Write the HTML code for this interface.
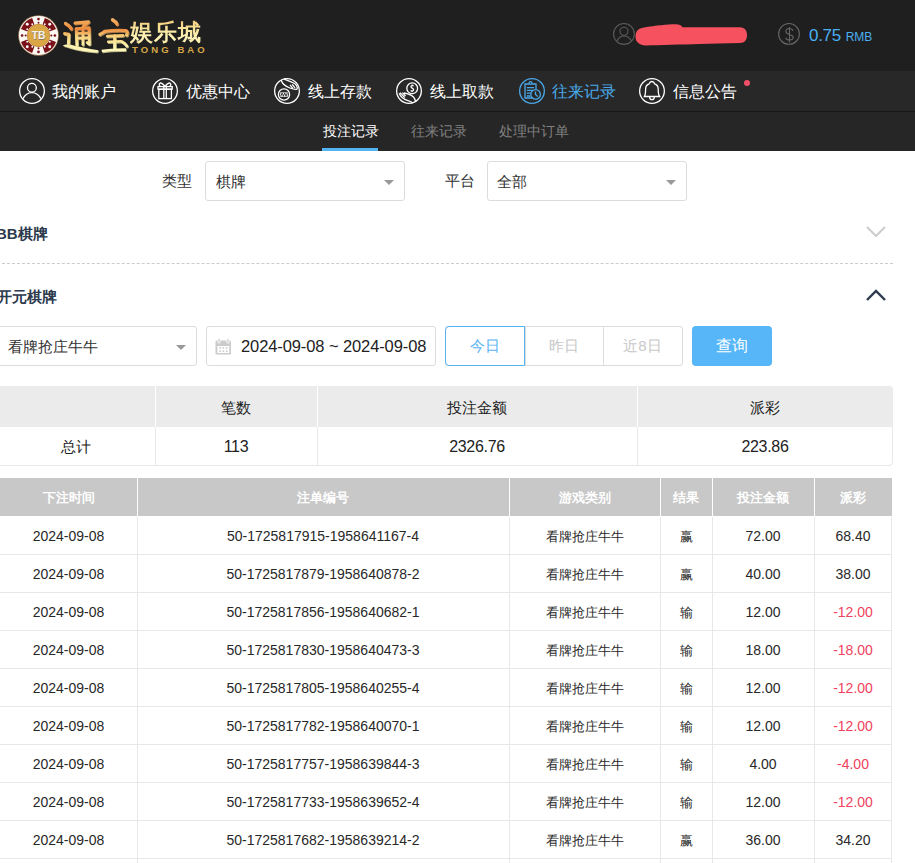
<!DOCTYPE html>
<html><head><meta charset="utf-8">
<style>
*{margin:0;padding:0;box-sizing:border-box}
html,body{width:915px;height:863px;overflow:hidden;background:#fff}
body{position:relative;font-family:"Liberation Sans",sans-serif;color:#333}
.abs{position:absolute}
#hdr{left:0;top:0;width:915px;height:71px;background:#1f1f1f}
#nav{left:0;top:71px;width:915px;height:40px;background:#282828}
#sep{left:0;top:111px;width:915px;height:1px;background:#171717}
#tabs{left:0;top:112px;width:915px;height:39px;background:#262626}
.ni{position:absolute;top:78px;height:26px}
.ni svg{position:absolute;left:0;top:0}
.nt{position:absolute;top:82px;font-size:16px;line-height:20px;color:#fff;font-weight:500;white-space:nowrap}
.tab{position:absolute;top:121px;font-size:14px;line-height:20px;color:#808080;white-space:nowrap}
.lbl{position:absolute;font-size:15px;line-height:20px;color:#333;white-space:nowrap}
.box{position:absolute;border:1px solid #dcdcdc;border-radius:3px;background:#fff}
.caret{position:absolute;width:0;height:0;border-left:5px solid transparent;border-right:5px solid transparent;border-top:5px solid #999}
table{border-collapse:collapse;position:absolute}
.sum td{border:1px solid #e8e8e8;text-align:center;font-size:15px;color:#222;height:39px}
.dt td{border-right:1px solid #e8e8e8;border-bottom:1px solid #e8e8e8;text-align:center;font-size:14px;color:#333;height:38px}
.dt th{background:#c8c8c8;color:#fff;font-weight:bold;font-size:13px;border-right:1px solid #fff;height:38px}
.neg{color:#f0425c}
.num{font-size:16px;letter-spacing:-0.3px}
.cj{font-size:13px}
.logo{font-family:"Liberation Serif",serif;font-weight:bold;white-space:nowrap;background:linear-gradient(180deg,#f5c878 0%,#f8e49a 35%,#fff4b8 70%,#f8e8a0 100%);-webkit-background-clip:text;background-clip:text;color:transparent}
.logo2{font-family:"Liberation Sans",sans-serif;font-weight:bold;white-space:nowrap;color:#d8a848}
.th{position:absolute;top:488px;font-size:13px;line-height:20px;font-weight:bold;color:#fff;text-align:center;white-space:nowrap}
.td{position:absolute;font-size:14px;line-height:20px;color:#282828;text-align:center;white-space:nowrap}
.td.neg{color:#f0425c}
</style></head><body>
<div id="hdr" class="abs"></div>
<div id="nav" class="abs"></div>
<div id="sep" class="abs"></div>
<div id="tabs" class="abs"></div>

<!-- logo chip -->
<svg class="abs" style="left:18px;top:15px" width="41" height="41" viewBox="0 0 40 40">
<circle cx="20" cy="20" r="19.8" fill="#a88660"/><circle cx="20" cy="20" r="19.1" fill="#fbf8f4"/>
<path fill="#7a1018" d="M26.22 2.90 A18.2 18.2 0 0 1 37.10 13.78 L30.81 16.07 A11.5 11.5 0 0 0 23.93 9.19 Z M37.10 26.22 A18.2 18.2 0 0 1 26.22 37.10 L23.93 30.81 A11.5 11.5 0 0 0 30.81 23.93 Z M13.78 37.10 A18.2 18.2 0 0 1 2.90 26.22 L9.19 23.93 A11.5 11.5 0 0 0 16.07 30.81 Z M2.90 13.78 A18.2 18.2 0 0 1 13.78 2.90 L16.07 9.19 A11.5 11.5 0 0 0 9.19 16.07 Z"/>
<circle cx="30.96" cy="9.04" r="1.4" fill="#fff"/><circle cx="26.11" cy="8.98" r="0.9" fill="#fff"/><circle cx="31.02" cy="13.89" r="0.9" fill="#fff"/><circle cx="30.96" cy="30.96" r="1.4" fill="#fff"/><circle cx="31.02" cy="26.11" r="0.9" fill="#fff"/><circle cx="26.11" cy="31.02" r="0.9" fill="#fff"/><circle cx="9.04" cy="30.96" r="1.4" fill="#fff"/><circle cx="13.89" cy="31.02" r="0.9" fill="#fff"/><circle cx="8.98" cy="26.11" r="0.9" fill="#fff"/><circle cx="9.04" cy="9.04" r="1.4" fill="#fff"/><circle cx="8.98" cy="13.89" r="0.9" fill="#fff"/><circle cx="13.89" cy="8.98" r="0.9" fill="#fff"/><circle cx="20.00" cy="4.00" r="1.3" fill="#7a1018"/><circle cx="20.00" cy="7.50" r="1" fill="#7a1018"/><circle cx="36.00" cy="20.00" r="1.3" fill="#7a1018"/><circle cx="32.50" cy="20.00" r="1" fill="#7a1018"/><circle cx="20.00" cy="36.00" r="1.3" fill="#7a1018"/><circle cx="20.00" cy="32.50" r="1" fill="#7a1018"/><circle cx="4.00" cy="20.00" r="1.3" fill="#7a1018"/><circle cx="7.50" cy="20.00" r="1" fill="#7a1018"/>
<circle cx="20" cy="20" r="11.2" fill="#c08a30"/><circle cx="20" cy="20" r="10.5" fill="#dba646"/>
<text x="20.4" y="24" font-size="10" font-family="Liberation Sans" font-weight="bold" fill="#8a7a60" text-anchor="middle">TB</text><text x="20" y="23.6" font-size="10" font-family="Liberation Sans" font-weight="bold" fill="#f6f2ea" text-anchor="middle">TB</text>
</svg>
<svg class="abs" style="left:58px;top:14px" width="74" height="44" viewBox="58 14 74 44">
<defs><linearGradient id="gg" gradientUnits="userSpaceOnUse" x1="0" y1="19" x2="0" y2="53"><stop offset="0" stop-color="#f4b060"/><stop offset="0.3" stop-color="#ec8c40"/><stop offset="0.5" stop-color="#f6d07a"/><stop offset="0.75" stop-color="#fcf0a8"/><stop offset="1" stop-color="#fff8c0"/></linearGradient></defs>
<g transform="translate(0.8,1)" opacity="0.7"><use href="#tb" stroke="#000"/><use href="#tbf" fill="#000"/></g>
<g id="tb" fill="none" stroke="url(#gg)" stroke-linecap="round" stroke-linejoin="round">
<path d="M65.5 23.5 Q69 25 71.2 28.5" stroke-width="3.3"/>
<path d="M75 23 L88.5 21.8 L83 26.5" stroke-width="2.9"/>
<path d="M76.2 28.8 L76.8 45" stroke-width="2.9"/>
<path d="M76.2 28.6 L89 27.8 L89.3 44 L87.2 42.6" stroke-width="2.9"/>
<path d="M77 33.2 L88.5 32.7 M77 38 L88.5 37.6" stroke-width="2.5"/>
<path d="M82.8 28 L82.8 44.5" stroke-width="2.5"/>
<path d="M64.5 33.5 L68.8 34.2 L68.4 43.2" stroke-width="2.9"/>
<path d="M104.5 31.2 Q115 29.8 126 30.5 Q128.2 31.5 126.5 35" stroke-width="3.1"/>
<path d="M99.8 34.2 L104.3 31.8" stroke-width="2.9"/>
<path d="M112.5 19.8 Q115.8 21.5 116.8 24" stroke-width="3.3"/>
<path d="M107.2 36.2 L123 35.3" stroke-width="2.7"/>
<path d="M108.2 41.8 L121 41.2" stroke-width="2.5"/>
<path d="M114.6 35.8 L114.6 49" stroke-width="2.9"/>
<path d="M122.2 41.8 Q125 43.2 126.8 46" stroke-width="2.9"/>
</g>
<g id="tbf" fill="url(#gg)">
<path d="M62.5 45.8 Q66 43.4 71 44.8 Q82 47.8 98.5 50.2 L97.3 52.4 Q80 51.5 70 48 Q66 46.7 62.5 45.8 Z"/>
<path d="M101.5 49.8 Q112 48 126.2 48.3 L125.6 51 Q112 50.6 102 52.2 Z"/>
</g>
</svg>
<div class="abs logo" style="left:130px;top:19px;font-size:22.5px;line-height:27px;letter-spacing:1px">娱乐城</div>
<div class="abs logo2" style="left:132px;top:44px;font-size:9.5px;line-height:11px;letter-spacing:3.1px">TONG BAO</div>

<!-- header right -->
<svg class="abs" style="left:613px;top:23px" width="22" height="22" viewBox="0 0 22 22" fill="none" stroke="#5a5a5a" stroke-width="1.1"><circle cx="10.95" cy="10.95" r="10.4"/><circle cx="11" cy="8.3" r="4"/><path d="M3.9 18 C5.5 14.6 8 13 11 13 C14 13 16.6 14.6 18.6 18"/></svg>
<svg class="abs" style="left:630px;top:20px" width="125" height="30" viewBox="630 20 125 30"><path fill="#f5515f" d="M644 27.5 C655 25.5 668 24.5 675 24.3 C679 24.2 681 25 682.5 27.3 L740 27.3 C745 27.3 747 31 747 35 C747 39.5 745 43 740 43 C725 43.5 712 43.7 700 44 C680 44.6 660 45 646 45.5 C640 45.7 635.5 42 635.5 37 C635.5 31 638.5 28.3 644 27.5 Z"/></svg>
<svg class="abs" style="left:778px;top:23px" width="22" height="22" viewBox="0 0 22 22" fill="none" stroke="#666" stroke-width="1.1"><circle cx="11" cy="10.9" r="10.4"/><path d="M15 7.9 C14.5 6.3 13 5.5 11.4 5.5 C9.2 5.5 7.9 6.8 7.9 8.4 C7.9 10.2 9.5 10.8 11.4 11.4 C13.4 12 15.2 12.8 15.2 14.6 C15.2 16.3 13.6 17 11.4 17 C9.6 17 8.2 16.2 7.7 14.8 M11.5 3.9 V19.4"/></svg>
<div class="abs" style="left:809px;top:26px;font-size:17px;line-height:20px;color:#4ab0f2;white-space:nowrap"><span style="letter-spacing:-0.3px">0.75</span> <span style="font-size:12px">RMB</span></div>

<!-- nav -->
<svg class="ni" style="left:19px" width="26" height="26" viewBox="0 0 26 26" fill="none" stroke="#fff" stroke-width="1.3"><circle cx="13" cy="13" r="12.35"/><circle cx="12.9" cy="9.7" r="4.4"/><path d="M4 20.8 C6 16.5 9.5 14.6 12.9 14.6 C16.3 14.6 19.8 16.5 21.9 20.8"/></svg>
<div class="nt" style="left:52px">我的账户</div>
<svg class="ni" style="left:152px" width="26" height="26" viewBox="0 0 26 26" fill="none" stroke="#fff" stroke-width="1.3"><circle cx="13" cy="13" r="12.35"/><rect x="6" y="8.6" width="14.2" height="2.6"/><rect x="6.8" y="11.2" width="12.6" height="9.4"/><path d="M11.8 8.6 V20.6 M14.3 8.6 V20.6"/><path d="M12.9 8.3 C11.5 6.5 9.8 4.8 8.2 5 C6.8 5.4 7 7.2 8.2 8.3 M13.1 8.3 C14.5 6.5 16.2 4.8 17.8 5 C19.2 5.4 19 7.2 17.8 8.3"/></svg>
<div class="nt" style="left:186px">优惠中心</div>
<svg class="ni" style="left:274px" width="26" height="26" viewBox="0 0 26 26" fill="none" stroke="#fff" stroke-width="1.3"><circle cx="13" cy="13" r="12.35"/><path d="M7.2 2 C8 5.5 11 8.2 15.8 10 C18.5 11 21 11.8 23.2 11.2 M9.8 0.9 C13 2.2 16.5 3.5 19.5 5 C22 6.3 23.6 8.7 23.2 11.2 M16 6.8 L18.8 10.4 M18.2 6.3 L21 9.8"/><circle cx="10" cy="16.5" r="5.6"/><rect x="6.2" y="14.4" width="7.6" height="4.4" fill="#fff" stroke="none"/><path d="M6.8 18.2 L8.1 15 L9.4 18.2 L10.7 15 L12 18.2 L13.2 15" stroke="#282828" stroke-width="0.9"/></svg>
<div class="nt" style="left:308px">线上存款</div>
<svg class="ni" style="left:396px" width="26" height="26" viewBox="0 0 26 26" fill="none" stroke="#fff" stroke-width="1.3"><circle cx="13" cy="13" r="12.35"/><circle cx="16.2" cy="10.3" r="5.4"/><path d="M17.6 8.2 C17 7.4 15 7.4 14.9 8.8 C14.9 10.2 17.6 10 17.6 11.7 C17.6 13.2 15.4 13.2 14.7 12.3 M16.2 6.6 V7.4 M16.2 13.2 V14" stroke-width="1.2"/><path d="M3.2 15.3 C4.5 19 7.5 21.3 12 22.6 C14 23.2 15.8 24 16.8 25.2 M7.8 15 C11 15.5 15 16.5 17.5 19 C18.6 20.2 19.2 22 19.6 23.7 M4 14.6 L8.8 19.6 M6.4 14.6 L9.6 18"/></svg>
<div class="nt" style="left:430px">线上取款</div>
<svg class="ni" style="left:519px" width="26" height="26" viewBox="0 0 26 26" fill="none" stroke="#4aa8e8" stroke-width="1.3"><circle cx="13" cy="13" r="12.35"/><path d="M10 6 H6 V20 H13.5 M13 6 H17 V11.2"/><circle cx="11.5" cy="5" r="1.4"/><path d="M7.8 9.6 H15 M7.8 12.4 H14 M7.8 15.2 H11.5 M7.8 18 H11"/><circle cx="16.6" cy="16.4" r="4.8"/><path d="M16.5 13.4 V16.5 L18.7 18.4"/></svg>
<div class="nt" style="left:552px;color:#4aa8e8">往来记录</div>
<svg class="ni" style="left:639px" width="26" height="26" viewBox="0 0 26 26" fill="none" stroke="#fff" stroke-width="1.3"><circle cx="13" cy="13" r="12.35"/><path d="M5.4 18.5 L20.6 18.5 C19.5 17 19.2 14 19.2 11.2 C19.2 8.2 17.6 6.4 15.6 5.8 C15.2 4.3 14.3 3.5 12.9 3.5 C11.5 3.5 10.6 4.3 10.2 5.8 C8.2 6.4 6.6 8.2 6.6 11.2 C6.6 14 6.3 17 5.4 18.5 Z"/><path d="M10.6 18.7 C10.6 20.5 11.5 21.7 12.9 21.7 C14.3 21.7 15.3 20.5 15.3 18.7"/></svg>
<div class="nt" style="left:673px">信息公告</div>
<div class="abs" style="left:744px;top:80px;width:6px;height:6px;border-radius:50%;background:#f04f68"></div>

<!-- sub tabs -->
<div class="tab" style="left:323px;color:#fff;font-weight:500">投注记录</div>
<div class="abs" style="left:322px;top:148px;width:56px;height:3px;background:#52b5f2"></div>
<div class="tab" style="left:411px">往来记录</div>
<div class="tab" style="left:499px">处理中订单</div>

<!-- filters -->
<div class="lbl" style="left:162px;top:171px">类型</div>
<div class="box" style="left:205px;top:161px;width:200px;height:40px"></div>
<div class="lbl" style="left:216px;top:172px">棋牌</div>
<div class="caret" style="left:384px;top:180px"></div>
<div class="lbl" style="left:445px;top:171px">平台</div>
<div class="box" style="left:487px;top:161px;width:200px;height:40px"></div>
<div class="lbl" style="left:497px;top:172px">全部</div>
<div class="caret" style="left:666px;top:180px"></div>

<div class="abs" style="left:-4px;top:224px;font-size:15px;line-height:20px;font-weight:bold;color:#2d3a4d">BB棋牌</div>
<svg class="abs" style="left:866px;top:226px" width="20" height="12" viewBox="0 0 20 12" fill="none" stroke="#ccc" stroke-width="2"><path d="M1 1 L10 10 L19 1"/></svg>
<div class="abs" style="left:2px;top:263px;width:891px;height:0;border-top:1px dashed #ccc"></div>
<div class="abs" style="left:-3px;top:287px;font-size:15px;line-height:20px;font-weight:bold;color:#2d3a4d">开元棋牌</div>
<svg class="abs" style="left:866px;top:289px" width="20" height="12" viewBox="0 0 20 12" fill="none" stroke="#2d3a4d" stroke-width="2.4"><path d="M1 11 L10 2 L19 11"/></svg>

<div class="box" style="left:-10px;top:326px;width:207px;height:40px"></div>
<div class="lbl" style="left:8px;top:337px">看牌抢庄牛牛</div>
<div class="caret" style="left:176px;top:345px"></div>
<div class="box" style="left:206px;top:326px;width:230px;height:40px"></div>
<svg class="abs" style="left:215px;top:338px" width="17" height="17" viewBox="0 0 17 17"><rect x="0.5" y="2.4" width="15.5" height="14" rx="1.2" fill="#ccc"/><rect x="2.4" y="8" width="11.9" height="7" fill="#fff"/><g fill="#ccc"><rect x="4.4" y="9.1" width="1.6" height="1.6"/><rect x="7.6" y="9.1" width="1.6" height="1.6"/><rect x="10.9" y="9.1" width="1.6" height="1.6"/><rect x="4.4" y="12.4" width="1.6" height="1.6"/><rect x="7.6" y="12.4" width="1.6" height="1.6"/><rect x="10.9" y="12.4" width="1.6" height="1.6"/></g><g fill="#ccc" stroke="#fff" stroke-width="0.9"><rect x="2.9" y="0.5" width="2.2" height="4.6" rx="1"/><rect x="11.9" y="0.5" width="2.2" height="4.6" rx="1"/></g></svg>
<div class="lbl" style="left:241px;top:336px;font-size:16.5px;letter-spacing:-0.1px;color:#222">2024-09-08 ~ 2024-09-08</div>

<div class="box" style="left:445px;top:326px;width:238px;height:40px"></div>
<div class="abs" style="left:525px;top:327px;width:1px;height:38px;background:#dcdcdc"></div>
<div class="abs" style="left:603px;top:327px;width:1px;height:38px;background:#dcdcdc"></div>
<div class="abs" style="left:445px;top:326px;width:80px;height:40px;border:1px solid #56b4f2;border-radius:4px 0 0 4px"></div>
<div class="lbl" style="left:445px;top:336px;width:80px;text-align:center;color:#56b4f2">今日</div>
<div class="lbl" style="left:525px;top:336px;width:78px;text-align:center;color:#c8c8c8">昨日</div>
<div class="lbl" style="left:603px;top:336px;width:79px;text-align:center;color:#c8c8c8">近8日</div>
<div class="abs" style="left:692px;top:326px;width:80px;height:40px;background:#56b6f7;border-radius:4px"></div>
<div class="lbl" style="left:692px;top:336px;width:80px;text-align:center;color:#fff;font-size:16px">查询</div>

<!-- summary -->
<div class="abs" style="left:-5px;top:386px;width:898px;height:80px;border:1px solid #e8e8e8;border-radius:4px;background:#fff"></div>
<div class="abs" style="left:-5px;top:386px;width:898px;height:41px;background:#ebebeb;border-radius:4px 4px 0 0"></div>
<div class="abs" style="left:155px;top:386px;width:1px;height:80px;background:#fff"></div>
<div class="abs" style="left:155px;top:427px;width:1px;height:39px;background:#e8e8e8"></div>
<div class="abs" style="left:317px;top:386px;width:1px;height:41px;background:#fff"></div>
<div class="abs" style="left:317px;top:427px;width:1px;height:39px;background:#e8e8e8"></div>
<div class="abs" style="left:637px;top:386px;width:1px;height:41px;background:#fff"></div>
<div class="abs" style="left:637px;top:427px;width:1px;height:39px;background:#e8e8e8"></div>
<div class="lbl" style="left:155px;top:398px;width:162px;text-align:center;color:#222">笔数</div>
<div class="lbl" style="left:317px;top:398px;width:320px;text-align:center;color:#222">投注金额</div>
<div class="lbl" style="left:637px;top:398px;width:256px;text-align:center;color:#222">派彩</div>
<div class="lbl" style="left:-2px;top:437px;width:155px;text-align:center;color:#222">总计</div>
<div class="lbl num" style="color:#222;left:155px;top:437px;width:162px;text-align:center">113</div>
<div class="lbl num" style="color:#222;left:317px;top:437px;width:320px;text-align:center">2326.76</div>
<div class="lbl num" style="color:#222;left:637px;top:437px;width:256px;text-align:center">223.86</div>

<!-- data table -->
<!--DT-->
<div class="abs" style="left:0;top:478px;width:892px;height:38px;background:#c8c8c8"></div>
<div class="abs" style="left:137px;top:478px;width:1px;height:38px;background:#fff"></div>
<div class="abs" style="left:509px;top:478px;width:1px;height:38px;background:#fff"></div>
<div class="abs" style="left:660px;top:478px;width:1px;height:38px;background:#fff"></div>
<div class="abs" style="left:712px;top:478px;width:1px;height:38px;background:#fff"></div>
<div class="abs" style="left:814px;top:478px;width:1px;height:38px;background:#fff"></div>
<div class="th" style="left:0px;width:137px">下注时间</div>
<div class="th" style="left:137px;width:372px">注单编号</div>
<div class="th" style="left:509px;width:151px">游戏类别</div>
<div class="th" style="left:660px;width:52px">结果</div>
<div class="th" style="left:712px;width:102px">投注金额</div>
<div class="th" style="left:814px;width:78px">派彩</div>
<div class="abs" style="left:891px;top:517px;width:1px;height:346px;background:#e8e8e8"></div>
<div class="abs" style="left:137px;top:517px;width:1px;height:346px;background:#e8e8e8"></div>
<div class="abs" style="left:509px;top:517px;width:1px;height:346px;background:#e8e8e8"></div>
<div class="abs" style="left:660px;top:517px;width:1px;height:346px;background:#e8e8e8"></div>
<div class="abs" style="left:712px;top:517px;width:1px;height:346px;background:#e8e8e8"></div>
<div class="abs" style="left:814px;top:517px;width:1px;height:346px;background:#e8e8e8"></div>
<div class="abs" style="left:0;top:554px;width:892px;height:1px;background:#e8e8e8"></div>
<div class="td" style="left:0px;top:526px;width:137px">2024-09-08</div>
<div class="td" style="left:137px;top:526px;width:372px">50-1725817915-1958641167-4</div>
<div class="td" style="left:509px;top:526px;width:151px"><span class=cj>看牌抢庄牛牛</span></div>
<div class="td" style="left:660px;top:526px;width:52px"><span class=cj>赢</span></div>
<div class="td" style="left:712px;top:526px;width:102px">72.00</div>
<div class="td" style="left:814px;top:526px;width:78px">68.40</div>
<div class="abs" style="left:0;top:592px;width:892px;height:1px;background:#e8e8e8"></div>
<div class="td" style="left:0px;top:564px;width:137px">2024-09-08</div>
<div class="td" style="left:137px;top:564px;width:372px">50-1725817879-1958640878-2</div>
<div class="td" style="left:509px;top:564px;width:151px"><span class=cj>看牌抢庄牛牛</span></div>
<div class="td" style="left:660px;top:564px;width:52px"><span class=cj>赢</span></div>
<div class="td" style="left:712px;top:564px;width:102px">40.00</div>
<div class="td" style="left:814px;top:564px;width:78px">38.00</div>
<div class="abs" style="left:0;top:630px;width:892px;height:1px;background:#e8e8e8"></div>
<div class="td" style="left:0px;top:602px;width:137px">2024-09-08</div>
<div class="td" style="left:137px;top:602px;width:372px">50-1725817856-1958640682-1</div>
<div class="td" style="left:509px;top:602px;width:151px"><span class=cj>看牌抢庄牛牛</span></div>
<div class="td" style="left:660px;top:602px;width:52px"><span class=cj>输</span></div>
<div class="td" style="left:712px;top:602px;width:102px">12.00</div>
<div class="td neg" style="left:814px;top:602px;width:78px">-12.00</div>
<div class="abs" style="left:0;top:668px;width:892px;height:1px;background:#e8e8e8"></div>
<div class="td" style="left:0px;top:640px;width:137px">2024-09-08</div>
<div class="td" style="left:137px;top:640px;width:372px">50-1725817830-1958640473-3</div>
<div class="td" style="left:509px;top:640px;width:151px"><span class=cj>看牌抢庄牛牛</span></div>
<div class="td" style="left:660px;top:640px;width:52px"><span class=cj>输</span></div>
<div class="td" style="left:712px;top:640px;width:102px">18.00</div>
<div class="td neg" style="left:814px;top:640px;width:78px">-18.00</div>
<div class="abs" style="left:0;top:706px;width:892px;height:1px;background:#e8e8e8"></div>
<div class="td" style="left:0px;top:678px;width:137px">2024-09-08</div>
<div class="td" style="left:137px;top:678px;width:372px">50-1725817805-1958640255-4</div>
<div class="td" style="left:509px;top:678px;width:151px"><span class=cj>看牌抢庄牛牛</span></div>
<div class="td" style="left:660px;top:678px;width:52px"><span class=cj>输</span></div>
<div class="td" style="left:712px;top:678px;width:102px">12.00</div>
<div class="td neg" style="left:814px;top:678px;width:78px">-12.00</div>
<div class="abs" style="left:0;top:744px;width:892px;height:1px;background:#e8e8e8"></div>
<div class="td" style="left:0px;top:716px;width:137px">2024-09-08</div>
<div class="td" style="left:137px;top:716px;width:372px">50-1725817782-1958640070-1</div>
<div class="td" style="left:509px;top:716px;width:151px"><span class=cj>看牌抢庄牛牛</span></div>
<div class="td" style="left:660px;top:716px;width:52px"><span class=cj>输</span></div>
<div class="td" style="left:712px;top:716px;width:102px">12.00</div>
<div class="td neg" style="left:814px;top:716px;width:78px">-12.00</div>
<div class="abs" style="left:0;top:782px;width:892px;height:1px;background:#e8e8e8"></div>
<div class="td" style="left:0px;top:754px;width:137px">2024-09-08</div>
<div class="td" style="left:137px;top:754px;width:372px">50-1725817757-1958639844-3</div>
<div class="td" style="left:509px;top:754px;width:151px"><span class=cj>看牌抢庄牛牛</span></div>
<div class="td" style="left:660px;top:754px;width:52px"><span class=cj>输</span></div>
<div class="td" style="left:712px;top:754px;width:102px">4.00</div>
<div class="td neg" style="left:814px;top:754px;width:78px">-4.00</div>
<div class="abs" style="left:0;top:820px;width:892px;height:1px;background:#e8e8e8"></div>
<div class="td" style="left:0px;top:792px;width:137px">2024-09-08</div>
<div class="td" style="left:137px;top:792px;width:372px">50-1725817733-1958639652-4</div>
<div class="td" style="left:509px;top:792px;width:151px"><span class=cj>看牌抢庄牛牛</span></div>
<div class="td" style="left:660px;top:792px;width:52px"><span class=cj>输</span></div>
<div class="td" style="left:712px;top:792px;width:102px">12.00</div>
<div class="td neg" style="left:814px;top:792px;width:78px">-12.00</div>
<div class="abs" style="left:0;top:858px;width:892px;height:1px;background:#e8e8e8"></div>
<div class="td" style="left:0px;top:830px;width:137px">2024-09-08</div>
<div class="td" style="left:137px;top:830px;width:372px">50-1725817682-1958639214-2</div>
<div class="td" style="left:509px;top:830px;width:151px"><span class=cj>看牌抢庄牛牛</span></div>
<div class="td" style="left:660px;top:830px;width:52px"><span class=cj>赢</span></div>
<div class="td" style="left:712px;top:830px;width:102px">36.00</div>
<div class="td" style="left:814px;top:830px;width:78px">34.20</div>
<div class="abs" style="left:0;top:896px;width:892px;height:1px;background:#e8e8e8"></div>
<div class="td" style="left:0px;top:868px;width:137px">2024-09-08</div>
<div class="td" style="left:137px;top:868px;width:372px">50-1725817650-1958638990-1</div>
<div class="td" style="left:509px;top:868px;width:151px"><span class=cj>看牌抢庄牛牛</span></div>
<div class="td" style="left:660px;top:868px;width:52px"><span class=cj>输</span></div>
<div class="td" style="left:712px;top:868px;width:102px">12.00</div>
<div class="td neg" style="left:814px;top:868px;width:78px">-12.00</div>
<!--/DT-->
</body></html>
